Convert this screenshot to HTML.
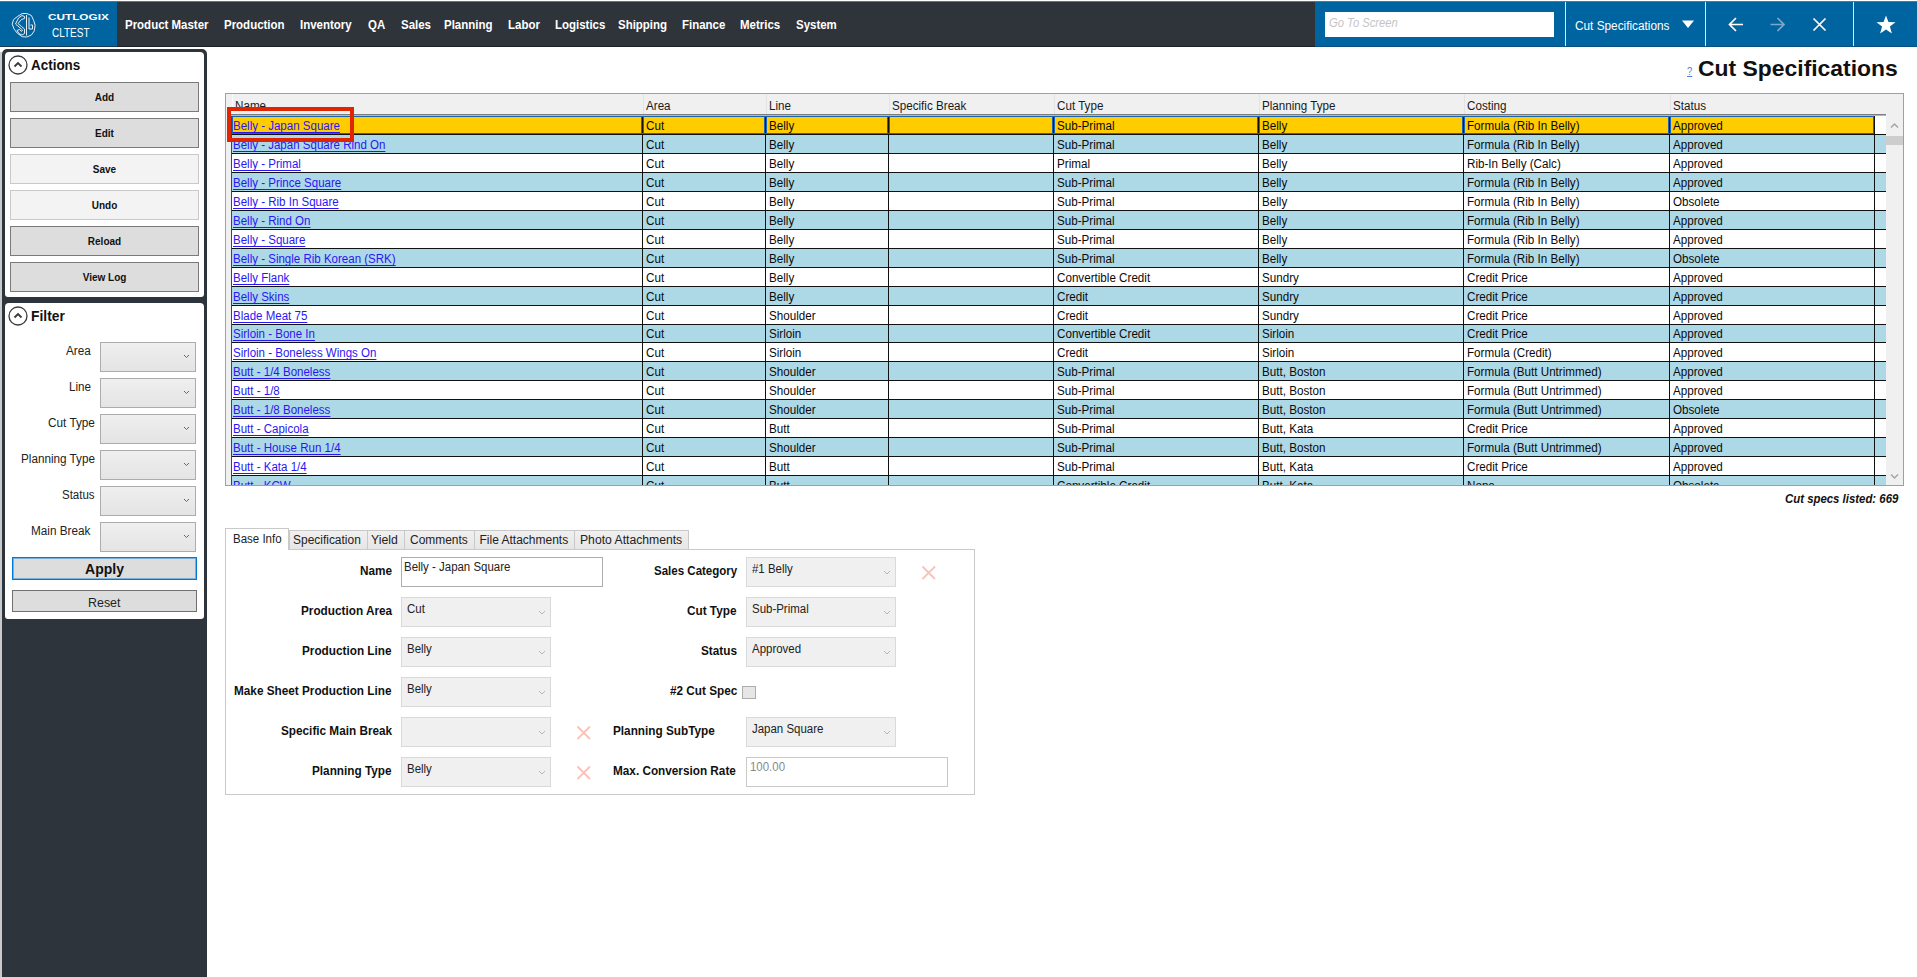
<!DOCTYPE html><html><head><meta charset="utf-8"><style>
*{box-sizing:border-box;margin:0;padding:0}
html,body{width:1917px;height:977px;overflow:hidden;background:#fff;font-family:"Liberation Sans",sans-serif;color:#000}
.a{position:absolute}
.t{position:absolute;white-space:nowrap;line-height:1}
.u{text-decoration:underline;text-decoration-skip-ink:none;text-underline-offset:2px}
</style></head><body>
<div class="a" style="left:0px;top:1px;width:1917px;height:1px;background:#6d7074"></div>
<div class="a" style="left:0px;top:2px;width:1917px;height:44px;background:#2f343b"></div>
<div class="a" style="left:0px;top:46px;width:1917px;height:1px;background:#1d2228"></div>
<div class="a" style="left:0px;top:2px;width:117px;height:44px;background:#0064a0"></div>
<div class="a" style="left:1315px;top:2px;width:602px;height:44px;background:#0064a0"></div>
<div class="a" style="left:0px;top:46px;width:117px;height:1px;background:#173c5a"></div>
<div class="a" style="left:1315px;top:46px;width:602px;height:1px;background:#0c4f82"></div>
<svg class="a" style="left:11px;top:12px" width="26" height="27" viewBox="0 0 26 27" fill="none" stroke="#e6eef7" stroke-width="1" stroke-linejoin="round">
<path d="M6.3 4.6 L11.2 1.5 L15.8 1.5 L20.4 3.5 L22.7 8.6 L24.1 13.2 L23.3 18.9 L20.4 23 L15.8 25 L11.2 24.7 L6.3 21.2 L3.2 17.2 L1.2 12.1 L2.6 7.5 Z"/>
<path d="M7.5 6 L11 3.5 L13.5 4.5 L13.5 6.5 L10.5 7.5 L7 11.5 L10.5 14.5 L13.5 17 L13.5 21.5 L11 23 L8 21.5 L6 18.5 L8.5 17.5 L10.5 19.5 L11.5 18 L4.5 12 Z"/>
<path d="M15.5 3 L15.5 23.5 M18 5.5 L18 17 L21.5 17 L21.5 13 L19.5 13"/>
</svg>
<div class="t" style="left:48.42px;top:13px;font-size:9px;font-weight:bold;font-style:normal;color:#fff;transform:scaleX(1.3076);transform-origin:0 0;">CUTLOGIX</div>
<div class="t" style="left:52.14px;top:26px;font-size:13px;font-weight:normal;font-style:normal;color:#fff;transform:scaleX(0.7672);transform-origin:0 0;">CLTEST</div>
<div class="t" style="left:124.53px;top:19px;font-size:12px;font-weight:bold;font-style:normal;color:#fff;transform:scaleX(0.9560);transform-origin:0 0;">Product Master</div>
<div class="t" style="left:224.23px;top:19px;font-size:12px;font-weight:bold;font-style:normal;color:#fff;transform:scaleX(0.9560);transform-origin:0 0;">Production</div>
<div class="t" style="left:300.43px;top:19px;font-size:12px;font-weight:bold;font-style:normal;color:#fff;transform:scaleX(0.9560);transform-origin:0 0;">Inventory</div>
<div class="t" style="left:368.43px;top:19px;font-size:12px;font-weight:bold;font-style:normal;color:#fff;transform:scaleX(0.9560);transform-origin:0 0;">QA</div>
<div class="t" style="left:401.43px;top:19px;font-size:12px;font-weight:bold;font-style:normal;color:#fff;transform:scaleX(0.9560);transform-origin:0 0;">Sales</div>
<div class="t" style="left:444.43px;top:19px;font-size:12px;font-weight:bold;font-style:normal;color:#fff;transform:scaleX(0.9560);transform-origin:0 0;">Planning</div>
<div class="t" style="left:508.43px;top:19px;font-size:12px;font-weight:bold;font-style:normal;color:#fff;transform:scaleX(0.9560);transform-origin:0 0;">Labor</div>
<div class="t" style="left:555.43px;top:19px;font-size:12px;font-weight:bold;font-style:normal;color:#fff;transform:scaleX(0.9560);transform-origin:0 0;">Logistics</div>
<div class="t" style="left:618.43px;top:19px;font-size:12px;font-weight:bold;font-style:normal;color:#fff;transform:scaleX(0.9560);transform-origin:0 0;">Shipping</div>
<div class="t" style="left:682.43px;top:19px;font-size:12px;font-weight:bold;font-style:normal;color:#fff;transform:scaleX(0.9560);transform-origin:0 0;">Finance</div>
<div class="t" style="left:740.43px;top:19px;font-size:12px;font-weight:bold;font-style:normal;color:#fff;transform:scaleX(0.9560);transform-origin:0 0;">Metrics</div>
<div class="t" style="left:796.43px;top:19px;font-size:12px;font-weight:bold;font-style:normal;color:#fff;transform:scaleX(0.9560);transform-origin:0 0;">System</div>
<div class="a" style="left:1325px;top:12px;width:229px;height:25px;background:#fff"></div>
<div class="t" style="left:1329.44px;top:17px;font-size:12px;font-weight:normal;font-style:italic;color:#c4c4c4;transform:scaleX(0.9348);transform-origin:0 0;">Go To Screen</div>
<div class="a" style="left:1565px;top:2px;width:1px;height:44px;background:#dfe9f2"></div>
<div class="a" style="left:1705px;top:2px;width:1px;height:44px;background:#dfe9f2"></div>
<div class="a" style="left:1853px;top:2px;width:1px;height:44px;background:#dfe9f2"></div>
<div class="t" style="left:1574.73px;top:20px;font-size:12.5px;font-weight:normal;font-style:normal;color:#fff;transform:scaleX(0.9446);transform-origin:0 0;">Cut Specifications</div>
<svg class="a" style="left:1682px;top:20px" width="12" height="9"><path d="M0 0.5 L12 0.5 L6 8 Z" fill="#fff"/></svg>
<svg class="a" style="left:1727px;top:16px" width="18" height="17" fill="none" stroke="#fff" stroke-width="1.7"><path d="M2.5 8.5 L16 8.5 M9 2 L2.5 8.5 L9 15"/></svg>
<svg class="a" style="left:1769px;top:16px" width="18" height="17" fill="none" stroke="#7ea7c8" stroke-width="1.7"><path d="M1.5 8.5 L15 8.5 M8.5 2 L15 8.5 L8.5 15"/></svg>
<svg class="a" style="left:1812px;top:17px" width="15" height="15" fill="none" stroke="#fff" stroke-width="1.7"><path d="M1.5 1.5 L13.5 13.5 M13.5 1.5 L1.5 13.5"/></svg>
<svg class="a" style="left:1876px;top:15px" width="20" height="19"><path d="M10 0.5 L12.4 7 L19.5 7.2 L13.9 11.5 L15.9 18.5 L10 14.4 L4.1 18.5 L6.1 11.5 L0.5 7.2 L7.6 7 Z" fill="#fff"/></svg>
<div class="a" style="left:0px;top:47px;width:207px;height:2px;background:#fff"></div>
<div class="a" style="left:2px;top:49px;width:205px;height:928px;background:#2e343c;border-radius:5px 5px 0 0"></div>
<div class="a" style="left:0px;top:52px;width:2px;height:925px;background:#c9cacc"></div>
<div class="a" style="left:5px;top:52px;width:199px;height:245px;background:#fff;border-radius:4px 4px 3px 3px"></div>
<svg class="a" style="left:8px;top:54.5px" width="20" height="20" fill="none" stroke="#3a3a3a" stroke-width="1.3"><circle cx="10" cy="10" r="9"/><path d="M6.5 11.5 L10 8 L13.5 11.5" stroke-width="1.8"/></svg>
<div class="t" style="left:30.92px;top:58px;font-size:14px;font-weight:bold;font-style:normal;color:#111;transform:scaleX(0.9604);transform-origin:0 0;">Actions</div>
<div class="a" style="left:10px;top:82px;width:189px;height:30px;background:#dddddd;border:1px solid #7a7a7a"></div>
<div class="t" style="left:94.78px;top:93px;font-size:10px;font-weight:bold;font-style:normal;color:#111;">Add</div>
<div class="a" style="left:10px;top:118px;width:189px;height:30px;background:#dddddd;border:1px solid #7a7a7a"></div>
<div class="t" style="left:95.06px;top:129px;font-size:10px;font-weight:bold;font-style:normal;color:#111;">Edit</div>
<div class="a" style="left:10px;top:154px;width:189px;height:30px;background:#f3f3f3;border:1px solid #c9c9c9"></div>
<div class="t" style="left:92.82px;top:165px;font-size:10px;font-weight:bold;font-style:normal;color:#111;">Save</div>
<div class="a" style="left:10px;top:190px;width:189px;height:30px;background:#f3f3f3;border:1px solid #c9c9c9"></div>
<div class="t" style="left:91.73px;top:201px;font-size:10px;font-weight:bold;font-style:normal;color:#111;">Undo</div>
<div class="a" style="left:10px;top:226px;width:189px;height:30px;background:#dddddd;border:1px solid #7a7a7a"></div>
<div class="t" style="left:87.83px;top:237px;font-size:10px;font-weight:bold;font-style:normal;color:#111;">Reload</div>
<div class="a" style="left:10px;top:262px;width:189px;height:30px;background:#dddddd;border:1px solid #7a7a7a"></div>
<div class="t" style="left:82.65px;top:273px;font-size:10px;font-weight:bold;font-style:normal;color:#111;">View Log</div>
<div class="a" style="left:5px;top:303px;width:199px;height:316px;background:#fff;border-radius:4px 4px 3px 3px"></div>
<svg class="a" style="left:8px;top:305.5px" width="20" height="20" fill="none" stroke="#3a3a3a" stroke-width="1.3"><circle cx="10" cy="10" r="9"/><path d="M6.5 11.5 L10 8 L13.5 11.5" stroke-width="1.8"/></svg>
<div class="t" style="left:31.11px;top:309px;font-size:14px;font-weight:bold;font-style:normal;color:#111;transform:scaleX(0.9876);transform-origin:0 0;">Filter</div>
<div class="t" style="left:65.79px;top:345px;font-size:12px;font-weight:normal;font-style:normal;color:#222;transform:scaleX(0.9784);transform-origin:0 0;">Area</div>
<div class="a" style="left:100px;top:342px;width:96px;height:30px;background:linear-gradient(#efefef,#e4e4e4);border:1px solid #acacac"></div>
<svg class="a" style="left:183px;top:354px" width="7" height="5" fill="none" stroke="#666" stroke-width="1"><path d="M1 1 L3.5 3.5 L6 1"/></svg>
<div class="t" style="left:68.58px;top:381px;font-size:12px;font-weight:normal;font-style:normal;color:#222;transform:scaleX(0.9698);transform-origin:0 0;">Line</div>
<div class="a" style="left:100px;top:378px;width:96px;height:30px;background:linear-gradient(#efefef,#e4e4e4);border:1px solid #acacac"></div>
<svg class="a" style="left:183px;top:390px" width="7" height="5" fill="none" stroke="#666" stroke-width="1"><path d="M1 1 L3.5 3.5 L6 1"/></svg>
<div class="t" style="left:47.69px;top:417px;font-size:12px;font-weight:normal;font-style:normal;color:#222;transform:scaleX(0.9811);transform-origin:0 0;">Cut Type</div>
<div class="a" style="left:100px;top:414px;width:96px;height:30px;background:linear-gradient(#efefef,#e4e4e4);border:1px solid #acacac"></div>
<svg class="a" style="left:183px;top:426px" width="7" height="5" fill="none" stroke="#666" stroke-width="1"><path d="M1 1 L3.5 3.5 L6 1"/></svg>
<div class="t" style="left:20.59px;top:453px;font-size:12px;font-weight:normal;font-style:normal;color:#222;transform:scaleX(0.9758);transform-origin:0 0;">Planning Type</div>
<div class="a" style="left:100px;top:450px;width:96px;height:30px;background:linear-gradient(#efefef,#e4e4e4);border:1px solid #acacac"></div>
<svg class="a" style="left:183px;top:462px" width="7" height="5" fill="none" stroke="#666" stroke-width="1"><path d="M1 1 L3.5 3.5 L6 1"/></svg>
<div class="t" style="left:61.97px;top:489px;font-size:12px;font-weight:normal;font-style:normal;color:#222;transform:scaleX(0.9583);transform-origin:0 0;">Status</div>
<div class="a" style="left:100px;top:486px;width:96px;height:30px;background:linear-gradient(#efefef,#e4e4e4);border:1px solid #acacac"></div>
<svg class="a" style="left:183px;top:498px" width="7" height="5" fill="none" stroke="#666" stroke-width="1"><path d="M1 1 L3.5 3.5 L6 1"/></svg>
<div class="t" style="left:31.29px;top:525px;font-size:12px;font-weight:normal;font-style:normal;color:#222;transform:scaleX(0.9788);transform-origin:0 0;">Main Break</div>
<div class="a" style="left:100px;top:522px;width:96px;height:30px;background:linear-gradient(#efefef,#e4e4e4);border:1px solid #acacac"></div>
<svg class="a" style="left:183px;top:534px" width="7" height="5" fill="none" stroke="#666" stroke-width="1"><path d="M1 1 L3.5 3.5 L6 1"/></svg>
<div class="a" style="left:12px;top:557px;width:185px;height:23px;background:#dddddd;border:1px solid #0078d7;box-shadow:inset 0 0 0 1px rgba(0,120,215,0.45)"></div>
<div class="t" style="left:85.06px;top:562px;font-size:14px;font-weight:bold;font-style:normal;color:#111;">Apply</div>
<div class="a" style="left:12px;top:590px;width:185px;height:22px;background:#dddddd;border:1px solid #707070"></div>
<div class="t" style="left:88.28px;top:596px;font-size:13.5px;font-weight:normal;font-style:normal;color:#222;transform:scaleX(0.9200);transform-origin:0 0;">Reset</div>
<div class="t" style="left:1686.99px;top:66px;font-size:11px;font-weight:normal;font-style:normal;color:#4a80d6;transform:scaleX(0.8500);transform-origin:0 0;text-decoration:underline;">?</div>
<div class="t" style="left:1698.38px;top:58px;font-size:22px;font-weight:bold;font-style:normal;color:#111;transform:scaleX(1.0411);transform-origin:0 0;">Cut Specifications</div>
<div class="a" style="left:225px;top:93px;width:1679px;height:393px;border:1px solid #89a5c4;background:#f0f0f0"></div>
<div class="a" style="left:226px;top:94px;width:1677px;height:391px;overflow:hidden">
<div class="t" style="left:9.02px;top:6px;font-size:12px;font-weight:normal;font-style:normal;color:#1a1a1a;transform:scaleX(0.9700);transform-origin:0 0;">Name</div>
<div class="t" style="left:420.02px;top:6px;font-size:12px;font-weight:normal;font-style:normal;color:#1a1a1a;transform:scaleX(0.9700);transform-origin:0 0;">Area</div>
<div class="t" style="left:543.02px;top:6px;font-size:12px;font-weight:normal;font-style:normal;color:#1a1a1a;transform:scaleX(0.9700);transform-origin:0 0;">Line</div>
<div class="t" style="left:666.02px;top:6px;font-size:12px;font-weight:normal;font-style:normal;color:#1a1a1a;transform:scaleX(0.9700);transform-origin:0 0;">Specific Break</div>
<div class="t" style="left:831.02px;top:6px;font-size:12px;font-weight:normal;font-style:normal;color:#1a1a1a;transform:scaleX(0.9700);transform-origin:0 0;">Cut Type</div>
<div class="t" style="left:1036.02px;top:6px;font-size:12px;font-weight:normal;font-style:normal;color:#1a1a1a;transform:scaleX(0.9700);transform-origin:0 0;">Planning Type</div>
<div class="t" style="left:1241.02px;top:6px;font-size:12px;font-weight:normal;font-style:normal;color:#1a1a1a;transform:scaleX(0.9700);transform-origin:0 0;">Costing</div>
<div class="t" style="left:1447.02px;top:6px;font-size:12px;font-weight:normal;font-style:normal;color:#1a1a1a;transform:scaleX(0.9700);transform-origin:0 0;">Status</div>
<div class="a" style="left:6px;top:0px;width:1px;height:20px;background:#fbfbfb"></div>
<div class="a" style="left:417px;top:0px;width:1px;height:20px;background:#e3e3e3"></div>
<div class="a" style="left:540px;top:0px;width:1px;height:20px;background:#e3e3e3"></div>
<div class="a" style="left:663px;top:0px;width:1px;height:20px;background:#e3e3e3"></div>
<div class="a" style="left:828px;top:0px;width:1px;height:20px;background:#e3e3e3"></div>
<div class="a" style="left:1033px;top:0px;width:1px;height:20px;background:#e3e3e3"></div>
<div class="a" style="left:1238px;top:0px;width:1px;height:20px;background:#e3e3e3"></div>
<div class="a" style="left:1444px;top:0px;width:1px;height:20px;background:#e3e3e3"></div>
<div class="a" style="left:5px;top:20px;width:1655px;height:1px;background:#7d7d7d"></div>
<div class="a" style="left:5px;top:21px;width:1655px;height:1px;background:#b8b8b8"></div>
<div class="a" style="left:6px;top:22px;width:1642px;height:18px;background:#ffcc00"></div>
<div class="a" style="left:1649px;top:22px;width:11px;height:18px;background:#fff"></div>
<div class="a" style="left:5px;top:40px;width:1655px;height:1px;background:#111"></div>
<div class="t" style="left:7.22px;top:26px;font-size:12px;font-weight:normal;font-style:normal;color:#2a16f5;transform:scaleX(0.9600);transform-origin:0 0;text-decoration:underline;text-decoration-skip-ink:none;text-underline-offset:1.5px;">Belly - Japan Square</div>
<div class="t" style="left:419.72px;top:26px;font-size:12px;font-weight:normal;font-style:normal;color:#0a0a0a;transform:scaleX(0.9700);transform-origin:0 0;">Cut</div>
<div class="t" style="left:542.72px;top:26px;font-size:12px;font-weight:normal;font-style:normal;color:#0a0a0a;transform:scaleX(0.9700);transform-origin:0 0;">Belly</div>
<div class="t" style="left:830.72px;top:26px;font-size:12px;font-weight:normal;font-style:normal;color:#0a0a0a;transform:scaleX(0.9700);transform-origin:0 0;">Sub-Primal</div>
<div class="t" style="left:1035.72px;top:26px;font-size:12px;font-weight:normal;font-style:normal;color:#0a0a0a;transform:scaleX(0.9700);transform-origin:0 0;">Belly</div>
<div class="t" style="left:1240.72px;top:26px;font-size:12px;font-weight:normal;font-style:normal;color:#0a0a0a;transform:scaleX(0.9700);transform-origin:0 0;">Formula (Rib In Belly)</div>
<div class="t" style="left:1446.72px;top:26px;font-size:12px;font-weight:normal;font-style:normal;color:#0a0a0a;transform:scaleX(0.9700);transform-origin:0 0;">Approved</div>
<div class="a" style="left:6px;top:41px;width:1654px;height:18px;background:#add8e6"></div>
<div class="a" style="left:5px;top:59px;width:1655px;height:1px;background:#111"></div>
<div class="t" style="left:7.22px;top:45px;font-size:12px;font-weight:normal;font-style:normal;color:#2a16f5;transform:scaleX(0.9600);transform-origin:0 0;text-decoration:underline;text-decoration-skip-ink:none;text-underline-offset:1.5px;">Belly - Japan Square Rind On</div>
<div class="t" style="left:419.72px;top:45px;font-size:12px;font-weight:normal;font-style:normal;color:#0a0a0a;transform:scaleX(0.9700);transform-origin:0 0;">Cut</div>
<div class="t" style="left:542.72px;top:45px;font-size:12px;font-weight:normal;font-style:normal;color:#0a0a0a;transform:scaleX(0.9700);transform-origin:0 0;">Belly</div>
<div class="t" style="left:830.72px;top:45px;font-size:12px;font-weight:normal;font-style:normal;color:#0a0a0a;transform:scaleX(0.9700);transform-origin:0 0;">Sub-Primal</div>
<div class="t" style="left:1035.72px;top:45px;font-size:12px;font-weight:normal;font-style:normal;color:#0a0a0a;transform:scaleX(0.9700);transform-origin:0 0;">Belly</div>
<div class="t" style="left:1240.72px;top:45px;font-size:12px;font-weight:normal;font-style:normal;color:#0a0a0a;transform:scaleX(0.9700);transform-origin:0 0;">Formula (Rib In Belly)</div>
<div class="t" style="left:1446.72px;top:45px;font-size:12px;font-weight:normal;font-style:normal;color:#0a0a0a;transform:scaleX(0.9700);transform-origin:0 0;">Approved</div>
<div class="a" style="left:6px;top:60px;width:1654px;height:18px;background:#ffffff"></div>
<div class="a" style="left:5px;top:78px;width:1655px;height:1px;background:#111"></div>
<div class="t" style="left:7.22px;top:64px;font-size:12px;font-weight:normal;font-style:normal;color:#2a16f5;transform:scaleX(0.9600);transform-origin:0 0;text-decoration:underline;text-decoration-skip-ink:none;text-underline-offset:1.5px;">Belly - Primal</div>
<div class="t" style="left:419.72px;top:64px;font-size:12px;font-weight:normal;font-style:normal;color:#0a0a0a;transform:scaleX(0.9700);transform-origin:0 0;">Cut</div>
<div class="t" style="left:542.72px;top:64px;font-size:12px;font-weight:normal;font-style:normal;color:#0a0a0a;transform:scaleX(0.9700);transform-origin:0 0;">Belly</div>
<div class="t" style="left:830.72px;top:64px;font-size:12px;font-weight:normal;font-style:normal;color:#0a0a0a;transform:scaleX(0.9700);transform-origin:0 0;">Primal</div>
<div class="t" style="left:1035.72px;top:64px;font-size:12px;font-weight:normal;font-style:normal;color:#0a0a0a;transform:scaleX(0.9700);transform-origin:0 0;">Belly</div>
<div class="t" style="left:1240.72px;top:64px;font-size:12px;font-weight:normal;font-style:normal;color:#0a0a0a;transform:scaleX(0.9700);transform-origin:0 0;">Rib-In Belly (Calc)</div>
<div class="t" style="left:1446.72px;top:64px;font-size:12px;font-weight:normal;font-style:normal;color:#0a0a0a;transform:scaleX(0.9700);transform-origin:0 0;">Approved</div>
<div class="a" style="left:6px;top:79px;width:1654px;height:18px;background:#add8e6"></div>
<div class="a" style="left:5px;top:97px;width:1655px;height:1px;background:#111"></div>
<div class="t" style="left:7.22px;top:83px;font-size:12px;font-weight:normal;font-style:normal;color:#2a16f5;transform:scaleX(0.9600);transform-origin:0 0;text-decoration:underline;text-decoration-skip-ink:none;text-underline-offset:1.5px;">Belly - Prince Square</div>
<div class="t" style="left:419.72px;top:83px;font-size:12px;font-weight:normal;font-style:normal;color:#0a0a0a;transform:scaleX(0.9700);transform-origin:0 0;">Cut</div>
<div class="t" style="left:542.72px;top:83px;font-size:12px;font-weight:normal;font-style:normal;color:#0a0a0a;transform:scaleX(0.9700);transform-origin:0 0;">Belly</div>
<div class="t" style="left:830.72px;top:83px;font-size:12px;font-weight:normal;font-style:normal;color:#0a0a0a;transform:scaleX(0.9700);transform-origin:0 0;">Sub-Primal</div>
<div class="t" style="left:1035.72px;top:83px;font-size:12px;font-weight:normal;font-style:normal;color:#0a0a0a;transform:scaleX(0.9700);transform-origin:0 0;">Belly</div>
<div class="t" style="left:1240.72px;top:83px;font-size:12px;font-weight:normal;font-style:normal;color:#0a0a0a;transform:scaleX(0.9700);transform-origin:0 0;">Formula (Rib In Belly)</div>
<div class="t" style="left:1446.72px;top:83px;font-size:12px;font-weight:normal;font-style:normal;color:#0a0a0a;transform:scaleX(0.9700);transform-origin:0 0;">Approved</div>
<div class="a" style="left:6px;top:98px;width:1654px;height:18px;background:#ffffff"></div>
<div class="a" style="left:5px;top:116px;width:1655px;height:1px;background:#111"></div>
<div class="t" style="left:7.22px;top:102px;font-size:12px;font-weight:normal;font-style:normal;color:#2a16f5;transform:scaleX(0.9600);transform-origin:0 0;text-decoration:underline;text-decoration-skip-ink:none;text-underline-offset:1.5px;">Belly - Rib In Square</div>
<div class="t" style="left:419.72px;top:102px;font-size:12px;font-weight:normal;font-style:normal;color:#0a0a0a;transform:scaleX(0.9700);transform-origin:0 0;">Cut</div>
<div class="t" style="left:542.72px;top:102px;font-size:12px;font-weight:normal;font-style:normal;color:#0a0a0a;transform:scaleX(0.9700);transform-origin:0 0;">Belly</div>
<div class="t" style="left:830.72px;top:102px;font-size:12px;font-weight:normal;font-style:normal;color:#0a0a0a;transform:scaleX(0.9700);transform-origin:0 0;">Sub-Primal</div>
<div class="t" style="left:1035.72px;top:102px;font-size:12px;font-weight:normal;font-style:normal;color:#0a0a0a;transform:scaleX(0.9700);transform-origin:0 0;">Belly</div>
<div class="t" style="left:1240.72px;top:102px;font-size:12px;font-weight:normal;font-style:normal;color:#0a0a0a;transform:scaleX(0.9700);transform-origin:0 0;">Formula (Rib In Belly)</div>
<div class="t" style="left:1446.72px;top:102px;font-size:12px;font-weight:normal;font-style:normal;color:#0a0a0a;transform:scaleX(0.9700);transform-origin:0 0;">Obsolete</div>
<div class="a" style="left:6px;top:117px;width:1654px;height:18px;background:#add8e6"></div>
<div class="a" style="left:5px;top:135px;width:1655px;height:1px;background:#111"></div>
<div class="t" style="left:7.22px;top:121px;font-size:12px;font-weight:normal;font-style:normal;color:#2a16f5;transform:scaleX(0.9600);transform-origin:0 0;text-decoration:underline;text-decoration-skip-ink:none;text-underline-offset:1.5px;">Belly - Rind On</div>
<div class="t" style="left:419.72px;top:121px;font-size:12px;font-weight:normal;font-style:normal;color:#0a0a0a;transform:scaleX(0.9700);transform-origin:0 0;">Cut</div>
<div class="t" style="left:542.72px;top:121px;font-size:12px;font-weight:normal;font-style:normal;color:#0a0a0a;transform:scaleX(0.9700);transform-origin:0 0;">Belly</div>
<div class="t" style="left:830.72px;top:121px;font-size:12px;font-weight:normal;font-style:normal;color:#0a0a0a;transform:scaleX(0.9700);transform-origin:0 0;">Sub-Primal</div>
<div class="t" style="left:1035.72px;top:121px;font-size:12px;font-weight:normal;font-style:normal;color:#0a0a0a;transform:scaleX(0.9700);transform-origin:0 0;">Belly</div>
<div class="t" style="left:1240.72px;top:121px;font-size:12px;font-weight:normal;font-style:normal;color:#0a0a0a;transform:scaleX(0.9700);transform-origin:0 0;">Formula (Rib In Belly)</div>
<div class="t" style="left:1446.72px;top:121px;font-size:12px;font-weight:normal;font-style:normal;color:#0a0a0a;transform:scaleX(0.9700);transform-origin:0 0;">Approved</div>
<div class="a" style="left:6px;top:136px;width:1654px;height:18px;background:#ffffff"></div>
<div class="a" style="left:5px;top:154px;width:1655px;height:1px;background:#111"></div>
<div class="t" style="left:7.22px;top:140px;font-size:12px;font-weight:normal;font-style:normal;color:#2a16f5;transform:scaleX(0.9600);transform-origin:0 0;text-decoration:underline;text-decoration-skip-ink:none;text-underline-offset:1.5px;">Belly - Square</div>
<div class="t" style="left:419.72px;top:140px;font-size:12px;font-weight:normal;font-style:normal;color:#0a0a0a;transform:scaleX(0.9700);transform-origin:0 0;">Cut</div>
<div class="t" style="left:542.72px;top:140px;font-size:12px;font-weight:normal;font-style:normal;color:#0a0a0a;transform:scaleX(0.9700);transform-origin:0 0;">Belly</div>
<div class="t" style="left:830.72px;top:140px;font-size:12px;font-weight:normal;font-style:normal;color:#0a0a0a;transform:scaleX(0.9700);transform-origin:0 0;">Sub-Primal</div>
<div class="t" style="left:1035.72px;top:140px;font-size:12px;font-weight:normal;font-style:normal;color:#0a0a0a;transform:scaleX(0.9700);transform-origin:0 0;">Belly</div>
<div class="t" style="left:1240.72px;top:140px;font-size:12px;font-weight:normal;font-style:normal;color:#0a0a0a;transform:scaleX(0.9700);transform-origin:0 0;">Formula (Rib In Belly)</div>
<div class="t" style="left:1446.72px;top:140px;font-size:12px;font-weight:normal;font-style:normal;color:#0a0a0a;transform:scaleX(0.9700);transform-origin:0 0;">Approved</div>
<div class="a" style="left:6px;top:155px;width:1654px;height:18px;background:#add8e6"></div>
<div class="a" style="left:5px;top:173px;width:1655px;height:1px;background:#111"></div>
<div class="t" style="left:7.22px;top:159px;font-size:12px;font-weight:normal;font-style:normal;color:#2a16f5;transform:scaleX(0.9600);transform-origin:0 0;text-decoration:underline;text-decoration-skip-ink:none;text-underline-offset:1.5px;">Belly - Single Rib Korean (SRK)</div>
<div class="t" style="left:419.72px;top:159px;font-size:12px;font-weight:normal;font-style:normal;color:#0a0a0a;transform:scaleX(0.9700);transform-origin:0 0;">Cut</div>
<div class="t" style="left:542.72px;top:159px;font-size:12px;font-weight:normal;font-style:normal;color:#0a0a0a;transform:scaleX(0.9700);transform-origin:0 0;">Belly</div>
<div class="t" style="left:830.72px;top:159px;font-size:12px;font-weight:normal;font-style:normal;color:#0a0a0a;transform:scaleX(0.9700);transform-origin:0 0;">Sub-Primal</div>
<div class="t" style="left:1035.72px;top:159px;font-size:12px;font-weight:normal;font-style:normal;color:#0a0a0a;transform:scaleX(0.9700);transform-origin:0 0;">Belly</div>
<div class="t" style="left:1240.72px;top:159px;font-size:12px;font-weight:normal;font-style:normal;color:#0a0a0a;transform:scaleX(0.9700);transform-origin:0 0;">Formula (Rib In Belly)</div>
<div class="t" style="left:1446.72px;top:159px;font-size:12px;font-weight:normal;font-style:normal;color:#0a0a0a;transform:scaleX(0.9700);transform-origin:0 0;">Obsolete</div>
<div class="a" style="left:6px;top:174px;width:1654px;height:18px;background:#ffffff"></div>
<div class="a" style="left:5px;top:192px;width:1655px;height:1px;background:#111"></div>
<div class="t" style="left:7.22px;top:178px;font-size:12px;font-weight:normal;font-style:normal;color:#2a16f5;transform:scaleX(0.9600);transform-origin:0 0;text-decoration:underline;text-decoration-skip-ink:none;text-underline-offset:1.5px;">Belly Flank</div>
<div class="t" style="left:419.72px;top:178px;font-size:12px;font-weight:normal;font-style:normal;color:#0a0a0a;transform:scaleX(0.9700);transform-origin:0 0;">Cut</div>
<div class="t" style="left:542.72px;top:178px;font-size:12px;font-weight:normal;font-style:normal;color:#0a0a0a;transform:scaleX(0.9700);transform-origin:0 0;">Belly</div>
<div class="t" style="left:830.72px;top:178px;font-size:12px;font-weight:normal;font-style:normal;color:#0a0a0a;transform:scaleX(0.9700);transform-origin:0 0;">Convertible Credit</div>
<div class="t" style="left:1035.72px;top:178px;font-size:12px;font-weight:normal;font-style:normal;color:#0a0a0a;transform:scaleX(0.9700);transform-origin:0 0;">Sundry</div>
<div class="t" style="left:1240.72px;top:178px;font-size:12px;font-weight:normal;font-style:normal;color:#0a0a0a;transform:scaleX(0.9700);transform-origin:0 0;">Credit Price</div>
<div class="t" style="left:1446.72px;top:178px;font-size:12px;font-weight:normal;font-style:normal;color:#0a0a0a;transform:scaleX(0.9700);transform-origin:0 0;">Approved</div>
<div class="a" style="left:6px;top:193px;width:1654px;height:18px;background:#add8e6"></div>
<div class="a" style="left:5px;top:211px;width:1655px;height:1px;background:#111"></div>
<div class="t" style="left:7.22px;top:197px;font-size:12px;font-weight:normal;font-style:normal;color:#2a16f5;transform:scaleX(0.9600);transform-origin:0 0;text-decoration:underline;text-decoration-skip-ink:none;text-underline-offset:1.5px;">Belly Skins</div>
<div class="t" style="left:419.72px;top:197px;font-size:12px;font-weight:normal;font-style:normal;color:#0a0a0a;transform:scaleX(0.9700);transform-origin:0 0;">Cut</div>
<div class="t" style="left:542.72px;top:197px;font-size:12px;font-weight:normal;font-style:normal;color:#0a0a0a;transform:scaleX(0.9700);transform-origin:0 0;">Belly</div>
<div class="t" style="left:830.72px;top:197px;font-size:12px;font-weight:normal;font-style:normal;color:#0a0a0a;transform:scaleX(0.9700);transform-origin:0 0;">Credit</div>
<div class="t" style="left:1035.72px;top:197px;font-size:12px;font-weight:normal;font-style:normal;color:#0a0a0a;transform:scaleX(0.9700);transform-origin:0 0;">Sundry</div>
<div class="t" style="left:1240.72px;top:197px;font-size:12px;font-weight:normal;font-style:normal;color:#0a0a0a;transform:scaleX(0.9700);transform-origin:0 0;">Credit Price</div>
<div class="t" style="left:1446.72px;top:197px;font-size:12px;font-weight:normal;font-style:normal;color:#0a0a0a;transform:scaleX(0.9700);transform-origin:0 0;">Approved</div>
<div class="a" style="left:6px;top:212px;width:1654px;height:18px;background:#ffffff"></div>
<div class="a" style="left:5px;top:230px;width:1655px;height:1px;background:#111"></div>
<div class="t" style="left:7.22px;top:216px;font-size:12px;font-weight:normal;font-style:normal;color:#2a16f5;transform:scaleX(0.9600);transform-origin:0 0;text-decoration:underline;text-decoration-skip-ink:none;text-underline-offset:1.5px;">Blade Meat 75</div>
<div class="t" style="left:419.72px;top:216px;font-size:12px;font-weight:normal;font-style:normal;color:#0a0a0a;transform:scaleX(0.9700);transform-origin:0 0;">Cut</div>
<div class="t" style="left:542.72px;top:216px;font-size:12px;font-weight:normal;font-style:normal;color:#0a0a0a;transform:scaleX(0.9700);transform-origin:0 0;">Shoulder</div>
<div class="t" style="left:830.72px;top:216px;font-size:12px;font-weight:normal;font-style:normal;color:#0a0a0a;transform:scaleX(0.9700);transform-origin:0 0;">Credit</div>
<div class="t" style="left:1035.72px;top:216px;font-size:12px;font-weight:normal;font-style:normal;color:#0a0a0a;transform:scaleX(0.9700);transform-origin:0 0;">Sundry</div>
<div class="t" style="left:1240.72px;top:216px;font-size:12px;font-weight:normal;font-style:normal;color:#0a0a0a;transform:scaleX(0.9700);transform-origin:0 0;">Credit Price</div>
<div class="t" style="left:1446.72px;top:216px;font-size:12px;font-weight:normal;font-style:normal;color:#0a0a0a;transform:scaleX(0.9700);transform-origin:0 0;">Approved</div>
<div class="a" style="left:6px;top:231px;width:1654px;height:17px;background:#add8e6"></div>
<div class="a" style="left:5px;top:248px;width:1655px;height:1px;background:#111"></div>
<div class="t" style="left:7.22px;top:234px;font-size:12px;font-weight:normal;font-style:normal;color:#2a16f5;transform:scaleX(0.9600);transform-origin:0 0;text-decoration:underline;text-decoration-skip-ink:none;text-underline-offset:1.5px;">Sirloin - Bone In</div>
<div class="t" style="left:419.72px;top:234px;font-size:12px;font-weight:normal;font-style:normal;color:#0a0a0a;transform:scaleX(0.9700);transform-origin:0 0;">Cut</div>
<div class="t" style="left:542.72px;top:234px;font-size:12px;font-weight:normal;font-style:normal;color:#0a0a0a;transform:scaleX(0.9700);transform-origin:0 0;">Sirloin</div>
<div class="t" style="left:830.72px;top:234px;font-size:12px;font-weight:normal;font-style:normal;color:#0a0a0a;transform:scaleX(0.9700);transform-origin:0 0;">Convertible Credit</div>
<div class="t" style="left:1035.72px;top:234px;font-size:12px;font-weight:normal;font-style:normal;color:#0a0a0a;transform:scaleX(0.9700);transform-origin:0 0;">Sirloin</div>
<div class="t" style="left:1240.72px;top:234px;font-size:12px;font-weight:normal;font-style:normal;color:#0a0a0a;transform:scaleX(0.9700);transform-origin:0 0;">Credit Price</div>
<div class="t" style="left:1446.72px;top:234px;font-size:12px;font-weight:normal;font-style:normal;color:#0a0a0a;transform:scaleX(0.9700);transform-origin:0 0;">Approved</div>
<div class="a" style="left:6px;top:249px;width:1654px;height:18px;background:#ffffff"></div>
<div class="a" style="left:5px;top:267px;width:1655px;height:1px;background:#111"></div>
<div class="t" style="left:7.22px;top:253px;font-size:12px;font-weight:normal;font-style:normal;color:#2a16f5;transform:scaleX(0.9600);transform-origin:0 0;text-decoration:underline;text-decoration-skip-ink:none;text-underline-offset:1.5px;">Sirloin - Boneless Wings On</div>
<div class="t" style="left:419.72px;top:253px;font-size:12px;font-weight:normal;font-style:normal;color:#0a0a0a;transform:scaleX(0.9700);transform-origin:0 0;">Cut</div>
<div class="t" style="left:542.72px;top:253px;font-size:12px;font-weight:normal;font-style:normal;color:#0a0a0a;transform:scaleX(0.9700);transform-origin:0 0;">Sirloin</div>
<div class="t" style="left:830.72px;top:253px;font-size:12px;font-weight:normal;font-style:normal;color:#0a0a0a;transform:scaleX(0.9700);transform-origin:0 0;">Credit</div>
<div class="t" style="left:1035.72px;top:253px;font-size:12px;font-weight:normal;font-style:normal;color:#0a0a0a;transform:scaleX(0.9700);transform-origin:0 0;">Sirloin</div>
<div class="t" style="left:1240.72px;top:253px;font-size:12px;font-weight:normal;font-style:normal;color:#0a0a0a;transform:scaleX(0.9700);transform-origin:0 0;">Formula (Credit)</div>
<div class="t" style="left:1446.72px;top:253px;font-size:12px;font-weight:normal;font-style:normal;color:#0a0a0a;transform:scaleX(0.9700);transform-origin:0 0;">Approved</div>
<div class="a" style="left:6px;top:268px;width:1654px;height:18px;background:#add8e6"></div>
<div class="a" style="left:5px;top:286px;width:1655px;height:1px;background:#111"></div>
<div class="t" style="left:7.22px;top:272px;font-size:12px;font-weight:normal;font-style:normal;color:#2a16f5;transform:scaleX(0.9600);transform-origin:0 0;text-decoration:underline;text-decoration-skip-ink:none;text-underline-offset:1.5px;">Butt - 1/4 Boneless</div>
<div class="t" style="left:419.72px;top:272px;font-size:12px;font-weight:normal;font-style:normal;color:#0a0a0a;transform:scaleX(0.9700);transform-origin:0 0;">Cut</div>
<div class="t" style="left:542.72px;top:272px;font-size:12px;font-weight:normal;font-style:normal;color:#0a0a0a;transform:scaleX(0.9700);transform-origin:0 0;">Shoulder</div>
<div class="t" style="left:830.72px;top:272px;font-size:12px;font-weight:normal;font-style:normal;color:#0a0a0a;transform:scaleX(0.9700);transform-origin:0 0;">Sub-Primal</div>
<div class="t" style="left:1035.72px;top:272px;font-size:12px;font-weight:normal;font-style:normal;color:#0a0a0a;transform:scaleX(0.9700);transform-origin:0 0;">Butt, Boston</div>
<div class="t" style="left:1240.72px;top:272px;font-size:12px;font-weight:normal;font-style:normal;color:#0a0a0a;transform:scaleX(0.9700);transform-origin:0 0;">Formula (Butt Untrimmed)</div>
<div class="t" style="left:1446.72px;top:272px;font-size:12px;font-weight:normal;font-style:normal;color:#0a0a0a;transform:scaleX(0.9700);transform-origin:0 0;">Approved</div>
<div class="a" style="left:6px;top:287px;width:1654px;height:18px;background:#ffffff"></div>
<div class="a" style="left:5px;top:305px;width:1655px;height:1px;background:#111"></div>
<div class="t" style="left:7.22px;top:291px;font-size:12px;font-weight:normal;font-style:normal;color:#2a16f5;transform:scaleX(0.9600);transform-origin:0 0;text-decoration:underline;text-decoration-skip-ink:none;text-underline-offset:1.5px;">Butt - 1/8</div>
<div class="t" style="left:419.72px;top:291px;font-size:12px;font-weight:normal;font-style:normal;color:#0a0a0a;transform:scaleX(0.9700);transform-origin:0 0;">Cut</div>
<div class="t" style="left:542.72px;top:291px;font-size:12px;font-weight:normal;font-style:normal;color:#0a0a0a;transform:scaleX(0.9700);transform-origin:0 0;">Shoulder</div>
<div class="t" style="left:830.72px;top:291px;font-size:12px;font-weight:normal;font-style:normal;color:#0a0a0a;transform:scaleX(0.9700);transform-origin:0 0;">Sub-Primal</div>
<div class="t" style="left:1035.72px;top:291px;font-size:12px;font-weight:normal;font-style:normal;color:#0a0a0a;transform:scaleX(0.9700);transform-origin:0 0;">Butt, Boston</div>
<div class="t" style="left:1240.72px;top:291px;font-size:12px;font-weight:normal;font-style:normal;color:#0a0a0a;transform:scaleX(0.9700);transform-origin:0 0;">Formula (Butt Untrimmed)</div>
<div class="t" style="left:1446.72px;top:291px;font-size:12px;font-weight:normal;font-style:normal;color:#0a0a0a;transform:scaleX(0.9700);transform-origin:0 0;">Approved</div>
<div class="a" style="left:6px;top:306px;width:1654px;height:18px;background:#add8e6"></div>
<div class="a" style="left:5px;top:324px;width:1655px;height:1px;background:#111"></div>
<div class="t" style="left:7.22px;top:310px;font-size:12px;font-weight:normal;font-style:normal;color:#2a16f5;transform:scaleX(0.9600);transform-origin:0 0;text-decoration:underline;text-decoration-skip-ink:none;text-underline-offset:1.5px;">Butt - 1/8 Boneless</div>
<div class="t" style="left:419.72px;top:310px;font-size:12px;font-weight:normal;font-style:normal;color:#0a0a0a;transform:scaleX(0.9700);transform-origin:0 0;">Cut</div>
<div class="t" style="left:542.72px;top:310px;font-size:12px;font-weight:normal;font-style:normal;color:#0a0a0a;transform:scaleX(0.9700);transform-origin:0 0;">Shoulder</div>
<div class="t" style="left:830.72px;top:310px;font-size:12px;font-weight:normal;font-style:normal;color:#0a0a0a;transform:scaleX(0.9700);transform-origin:0 0;">Sub-Primal</div>
<div class="t" style="left:1035.72px;top:310px;font-size:12px;font-weight:normal;font-style:normal;color:#0a0a0a;transform:scaleX(0.9700);transform-origin:0 0;">Butt, Boston</div>
<div class="t" style="left:1240.72px;top:310px;font-size:12px;font-weight:normal;font-style:normal;color:#0a0a0a;transform:scaleX(0.9700);transform-origin:0 0;">Formula (Butt Untrimmed)</div>
<div class="t" style="left:1446.72px;top:310px;font-size:12px;font-weight:normal;font-style:normal;color:#0a0a0a;transform:scaleX(0.9700);transform-origin:0 0;">Obsolete</div>
<div class="a" style="left:6px;top:325px;width:1654px;height:18px;background:#ffffff"></div>
<div class="a" style="left:5px;top:343px;width:1655px;height:1px;background:#111"></div>
<div class="t" style="left:7.22px;top:329px;font-size:12px;font-weight:normal;font-style:normal;color:#2a16f5;transform:scaleX(0.9600);transform-origin:0 0;text-decoration:underline;text-decoration-skip-ink:none;text-underline-offset:1.5px;">Butt - Capicola</div>
<div class="t" style="left:419.72px;top:329px;font-size:12px;font-weight:normal;font-style:normal;color:#0a0a0a;transform:scaleX(0.9700);transform-origin:0 0;">Cut</div>
<div class="t" style="left:542.72px;top:329px;font-size:12px;font-weight:normal;font-style:normal;color:#0a0a0a;transform:scaleX(0.9700);transform-origin:0 0;">Butt</div>
<div class="t" style="left:830.72px;top:329px;font-size:12px;font-weight:normal;font-style:normal;color:#0a0a0a;transform:scaleX(0.9700);transform-origin:0 0;">Sub-Primal</div>
<div class="t" style="left:1035.72px;top:329px;font-size:12px;font-weight:normal;font-style:normal;color:#0a0a0a;transform:scaleX(0.9700);transform-origin:0 0;">Butt, Kata</div>
<div class="t" style="left:1240.72px;top:329px;font-size:12px;font-weight:normal;font-style:normal;color:#0a0a0a;transform:scaleX(0.9700);transform-origin:0 0;">Credit Price</div>
<div class="t" style="left:1446.72px;top:329px;font-size:12px;font-weight:normal;font-style:normal;color:#0a0a0a;transform:scaleX(0.9700);transform-origin:0 0;">Approved</div>
<div class="a" style="left:6px;top:344px;width:1654px;height:18px;background:#add8e6"></div>
<div class="a" style="left:5px;top:362px;width:1655px;height:1px;background:#111"></div>
<div class="t" style="left:7.22px;top:348px;font-size:12px;font-weight:normal;font-style:normal;color:#2a16f5;transform:scaleX(0.9600);transform-origin:0 0;text-decoration:underline;text-decoration-skip-ink:none;text-underline-offset:1.5px;">Butt - House Run 1/4</div>
<div class="t" style="left:419.72px;top:348px;font-size:12px;font-weight:normal;font-style:normal;color:#0a0a0a;transform:scaleX(0.9700);transform-origin:0 0;">Cut</div>
<div class="t" style="left:542.72px;top:348px;font-size:12px;font-weight:normal;font-style:normal;color:#0a0a0a;transform:scaleX(0.9700);transform-origin:0 0;">Shoulder</div>
<div class="t" style="left:830.72px;top:348px;font-size:12px;font-weight:normal;font-style:normal;color:#0a0a0a;transform:scaleX(0.9700);transform-origin:0 0;">Sub-Primal</div>
<div class="t" style="left:1035.72px;top:348px;font-size:12px;font-weight:normal;font-style:normal;color:#0a0a0a;transform:scaleX(0.9700);transform-origin:0 0;">Butt, Boston</div>
<div class="t" style="left:1240.72px;top:348px;font-size:12px;font-weight:normal;font-style:normal;color:#0a0a0a;transform:scaleX(0.9700);transform-origin:0 0;">Formula (Butt Untrimmed)</div>
<div class="t" style="left:1446.72px;top:348px;font-size:12px;font-weight:normal;font-style:normal;color:#0a0a0a;transform:scaleX(0.9700);transform-origin:0 0;">Approved</div>
<div class="a" style="left:6px;top:363px;width:1654px;height:18px;background:#ffffff"></div>
<div class="a" style="left:5px;top:381px;width:1655px;height:1px;background:#111"></div>
<div class="t" style="left:7.22px;top:367px;font-size:12px;font-weight:normal;font-style:normal;color:#2a16f5;transform:scaleX(0.9600);transform-origin:0 0;text-decoration:underline;text-decoration-skip-ink:none;text-underline-offset:1.5px;">Butt - Kata 1/4</div>
<div class="t" style="left:419.72px;top:367px;font-size:12px;font-weight:normal;font-style:normal;color:#0a0a0a;transform:scaleX(0.9700);transform-origin:0 0;">Cut</div>
<div class="t" style="left:542.72px;top:367px;font-size:12px;font-weight:normal;font-style:normal;color:#0a0a0a;transform:scaleX(0.9700);transform-origin:0 0;">Butt</div>
<div class="t" style="left:830.72px;top:367px;font-size:12px;font-weight:normal;font-style:normal;color:#0a0a0a;transform:scaleX(0.9700);transform-origin:0 0;">Sub-Primal</div>
<div class="t" style="left:1035.72px;top:367px;font-size:12px;font-weight:normal;font-style:normal;color:#0a0a0a;transform:scaleX(0.9700);transform-origin:0 0;">Butt, Kata</div>
<div class="t" style="left:1240.72px;top:367px;font-size:12px;font-weight:normal;font-style:normal;color:#0a0a0a;transform:scaleX(0.9700);transform-origin:0 0;">Credit Price</div>
<div class="t" style="left:1446.72px;top:367px;font-size:12px;font-weight:normal;font-style:normal;color:#0a0a0a;transform:scaleX(0.9700);transform-origin:0 0;">Approved</div>
<div class="a" style="left:6px;top:382px;width:1654px;height:18px;background:#add8e6"></div>
<div class="a" style="left:5px;top:400px;width:1655px;height:1px;background:#111"></div>
<div class="t" style="left:7.22px;top:386px;font-size:12px;font-weight:normal;font-style:normal;color:#2a16f5;transform:scaleX(0.9600);transform-origin:0 0;text-decoration:underline;text-decoration-skip-ink:none;text-underline-offset:1.5px;">Butt - KCW</div>
<div class="t" style="left:419.72px;top:386px;font-size:12px;font-weight:normal;font-style:normal;color:#0a0a0a;transform:scaleX(0.9700);transform-origin:0 0;">Cut</div>
<div class="t" style="left:542.72px;top:386px;font-size:12px;font-weight:normal;font-style:normal;color:#0a0a0a;transform:scaleX(0.9700);transform-origin:0 0;">Butt</div>
<div class="t" style="left:830.72px;top:386px;font-size:12px;font-weight:normal;font-style:normal;color:#0a0a0a;transform:scaleX(0.9700);transform-origin:0 0;">Convertible Credit</div>
<div class="t" style="left:1035.72px;top:386px;font-size:12px;font-weight:normal;font-style:normal;color:#0a0a0a;transform:scaleX(0.9700);transform-origin:0 0;">Butt, Kata</div>
<div class="t" style="left:1240.72px;top:386px;font-size:12px;font-weight:normal;font-style:normal;color:#0a0a0a;transform:scaleX(0.9700);transform-origin:0 0;">None</div>
<div class="t" style="left:1446.72px;top:386px;font-size:12px;font-weight:normal;font-style:normal;color:#0a0a0a;transform:scaleX(0.9700);transform-origin:0 0;">Obsolete</div>
<div class="a" style="left:5px;top:22px;width:1px;height:372px;background:#444"></div>
<div class="a" style="left:416px;top:22px;width:1px;height:372px;background:#111"></div>
<div class="a" style="left:539px;top:22px;width:1px;height:372px;background:#111"></div>
<div class="a" style="left:662px;top:22px;width:1px;height:372px;background:#111"></div>
<div class="a" style="left:827px;top:22px;width:1px;height:372px;background:#111"></div>
<div class="a" style="left:1032px;top:22px;width:1px;height:372px;background:#111"></div>
<div class="a" style="left:1237px;top:22px;width:1px;height:372px;background:#111"></div>
<div class="a" style="left:1443px;top:22px;width:1px;height:372px;background:#111"></div>
<div class="a" style="left:1648px;top:22px;width:1px;height:372px;background:#111"></div>
<div class="a" style="left:6px;top:22px;width:1642px;height:1px;background:#1766b5"></div>
<div class="a" style="left:6px;top:39px;width:1642px;height:1px;background:#1766b5"></div>
<div class="a" style="left:6px;top:22px;width:1px;height:18px;background:#1766b5"></div>
<div class="a" style="left:417px;top:22px;width:1px;height:18px;background:#1766b5"></div>
<div class="a" style="left:540px;top:22px;width:1px;height:18px;background:#1766b5"></div>
<div class="a" style="left:663px;top:22px;width:1px;height:18px;background:#1766b5"></div>
<div class="a" style="left:828px;top:22px;width:1px;height:18px;background:#1766b5"></div>
<div class="a" style="left:1033px;top:22px;width:1px;height:18px;background:#1766b5"></div>
<div class="a" style="left:1238px;top:22px;width:1px;height:18px;background:#1766b5"></div>
<div class="a" style="left:1444px;top:22px;width:1px;height:18px;background:#1766b5"></div>
<div class="a" style="left:415px;top:22px;width:1px;height:18px;background:#1766b5"></div>
<div class="a" style="left:538px;top:22px;width:1px;height:18px;background:#1766b5"></div>
<div class="a" style="left:661px;top:22px;width:1px;height:18px;background:#1766b5"></div>
<div class="a" style="left:826px;top:22px;width:1px;height:18px;background:#1766b5"></div>
<div class="a" style="left:1031px;top:22px;width:1px;height:18px;background:#1766b5"></div>
<div class="a" style="left:1236px;top:22px;width:1px;height:18px;background:#1766b5"></div>
<div class="a" style="left:1442px;top:22px;width:1px;height:18px;background:#1766b5"></div>
<div class="a" style="left:1647px;top:22px;width:1px;height:18px;background:#1766b5"></div>
<div class="a" style="left:1660px;top:20px;width:17px;height:371px;background:#f0f0f0"></div>
<div class="a" style="left:1660px;top:42px;width:17px;height:9px;background:#cdcdcd"></div>
<svg class="a" style="left:1664px;top:28px" width="9" height="7" fill="none" stroke="#a4a4a4" stroke-width="1.5"><path d="M1 5.5 L4.5 2 L8 5.5"/></svg>
<svg class="a" style="left:1664px;top:379px" width="9" height="7" fill="none" stroke="#a4a4a4" stroke-width="1.5"><path d="M1 1.5 L4.5 5 L8 1.5"/></svg>
</div>
<div class="a" style="left:227px;top:107px;width:127px;height:35px;border:4px solid #e02500"></div>
<div class="t" style="left:1784.87px;top:493px;font-size:12px;font-weight:bold;font-style:italic;color:#111;transform:scaleX(0.9492);transform-origin:0 0;">Cut specs listed: 669</div>
<div class="a" style="left:225px;top:549px;width:750px;height:246px;border:1px solid #c9c9c9;background:#fff"></div>
<div class="a" style="left:225px;top:528px;width:64px;height:22px;background:#fff;border:1px solid #c9c9c9;border-bottom:none"></div>
<div class="t" style="left:232.92px;top:533px;font-size:12px;font-weight:normal;font-style:normal;color:#222;transform:scaleX(0.9586);transform-origin:0 0;">Base Info</div>
<div class="a" style="left:289px;top:530px;width:79px;height:20px;background:linear-gradient(#f0f0f0,#e6e6e6);border:1px solid #c9c9c9"></div>
<div class="t" style="left:293.00px;top:534px;font-size:12px;font-weight:normal;font-style:normal;color:#222;transform:scaleX(0.9965);transform-origin:0 0;">Specification</div>
<div class="a" style="left:367px;top:530px;width:38px;height:20px;background:linear-gradient(#f0f0f0,#e6e6e6);border:1px solid #c9c9c9"></div>
<div class="t" style="left:370.89px;top:534px;font-size:12px;font-weight:normal;font-style:normal;color:#222;transform:scaleX(1.0214);transform-origin:0 0;">Yield</div>
<div class="a" style="left:404px;top:530px;width:71px;height:20px;background:linear-gradient(#f0f0f0,#e6e6e6);border:1px solid #c9c9c9"></div>
<div class="t" style="left:410.00px;top:534px;font-size:12px;font-weight:normal;font-style:normal;color:#222;transform:scaleX(0.9964);transform-origin:0 0;">Comments</div>
<div class="a" style="left:474px;top:530px;width:101px;height:20px;background:linear-gradient(#f0f0f0,#e6e6e6);border:1px solid #c9c9c9"></div>
<div class="t" style="left:479.50px;top:534px;font-size:12px;font-weight:normal;font-style:normal;color:#222;">File Attachments</div>
<div class="a" style="left:574px;top:530px;width:115px;height:20px;background:linear-gradient(#f0f0f0,#e6e6e6);border:1px solid #c9c9c9"></div>
<div class="t" style="left:579.69px;top:534px;font-size:12px;font-weight:normal;font-style:normal;color:#222;transform:scaleX(1.0147);transform-origin:0 0;">Photo Attachments</div>
<div class="t" style="left:359.76px;top:565px;font-size:12px;font-weight:bold;font-style:normal;color:#111;transform:scaleX(0.9800);transform-origin:0 0;">Name</div>
<div class="a" style="left:401px;top:557px;width:202px;height:30px;border:1px solid #acacac;background:#fff"></div>
<div class="t" style="left:404.43px;top:561px;font-size:12px;font-weight:normal;font-style:normal;color:#222;transform:scaleX(0.9550);transform-origin:0 0;">Belly - Japan Square</div>
<div class="t" style="left:300.75px;top:605px;font-size:12px;font-weight:bold;font-style:normal;color:#111;transform:scaleX(0.9800);transform-origin:0 0;">Production Area</div>
<div class="a" style="left:401px;top:597px;width:150px;height:30px;background:#f0f0f0;border:1px solid #d9d9d9"></div>
<div class="t" style="left:406.93px;top:603px;font-size:12px;font-weight:normal;font-style:normal;color:#222;transform:scaleX(0.9550);transform-origin:0 0;">Cut</div>
<svg class="a" style="left:538px;top:610px" width="8" height="5" fill="none" stroke="#b5b5b5" stroke-width="1"><path d="M1 1 L4 4 L7 1"/></svg>
<div class="t" style="left:302.29px;top:645px;font-size:12px;font-weight:bold;font-style:normal;color:#111;transform:scaleX(0.9800);transform-origin:0 0;">Production Line</div>
<div class="a" style="left:401px;top:637px;width:150px;height:30px;background:#f0f0f0;border:1px solid #d9d9d9"></div>
<div class="t" style="left:406.93px;top:643px;font-size:12px;font-weight:normal;font-style:normal;color:#222;transform:scaleX(0.9550);transform-origin:0 0;">Belly</div>
<svg class="a" style="left:538px;top:650px" width="8" height="5" fill="none" stroke="#b5b5b5" stroke-width="1"><path d="M1 1 L4 4 L7 1"/></svg>
<div class="t" style="left:234.32px;top:685px;font-size:12px;font-weight:bold;font-style:normal;color:#111;transform:scaleX(0.9800);transform-origin:0 0;">Make Sheet Production Line</div>
<div class="a" style="left:401px;top:677px;width:150px;height:30px;background:#f0f0f0;border:1px solid #d9d9d9"></div>
<div class="t" style="left:406.93px;top:683px;font-size:12px;font-weight:normal;font-style:normal;color:#222;transform:scaleX(0.9550);transform-origin:0 0;">Belly</div>
<svg class="a" style="left:538px;top:690px" width="8" height="5" fill="none" stroke="#b5b5b5" stroke-width="1"><path d="M1 1 L4 4 L7 1"/></svg>
<div class="t" style="left:280.68px;top:725px;font-size:12px;font-weight:bold;font-style:normal;color:#111;transform:scaleX(0.9800);transform-origin:0 0;">Specific Main Break</div>
<div class="a" style="left:401px;top:717px;width:150px;height:30px;background:#f0f0f0;border:1px solid #d9d9d9"></div>
<svg class="a" style="left:538px;top:730px" width="8" height="5" fill="none" stroke="#b5b5b5" stroke-width="1"><path d="M1 1 L4 4 L7 1"/></svg>
<div class="t" style="left:312.30px;top:765px;font-size:12px;font-weight:bold;font-style:normal;color:#111;transform:scaleX(0.9800);transform-origin:0 0;">Planning Type</div>
<div class="a" style="left:401px;top:757px;width:150px;height:30px;background:#f0f0f0;border:1px solid #d9d9d9"></div>
<div class="t" style="left:406.93px;top:763px;font-size:12px;font-weight:normal;font-style:normal;color:#222;transform:scaleX(0.9550);transform-origin:0 0;">Belly</div>
<svg class="a" style="left:538px;top:770px" width="8" height="5" fill="none" stroke="#b5b5b5" stroke-width="1"><path d="M1 1 L4 4 L7 1"/></svg>
<svg class="a" style="left:577px;top:726px" width="14" height="14" fill="none" stroke="#fbc2b9" stroke-width="1.8" stroke-linecap="round"><path d="M1 1 L12.5 12.5 M12.5 1 L1 12.5"/></svg>
<svg class="a" style="left:577px;top:766px" width="14" height="14" fill="none" stroke="#fbc2b9" stroke-width="1.8" stroke-linecap="round"><path d="M1 1 L12.5 12.5 M12.5 1 L1 12.5"/></svg>
<div class="t" style="left:653.64px;top:565px;font-size:12px;font-weight:bold;font-style:normal;color:#111;transform:scaleX(0.9600);transform-origin:0 0;">Sales Category</div>
<div class="a" style="left:746px;top:557px;width:150px;height:30px;background:#f0f0f0;border:1px solid #d9d9d9"></div>
<div class="t" style="left:751.73px;top:563px;font-size:12px;font-weight:normal;font-style:normal;color:#222;transform:scaleX(0.9550);transform-origin:0 0;">#1 Belly</div>
<svg class="a" style="left:883px;top:570px" width="8" height="5" fill="none" stroke="#b5b5b5" stroke-width="1"><path d="M1 1 L4 4 L7 1"/></svg>
<div class="t" style="left:687.46px;top:605px;font-size:12px;font-weight:bold;font-style:normal;color:#111;transform:scaleX(0.9800);transform-origin:0 0;">Cut Type</div>
<div class="a" style="left:746px;top:597px;width:150px;height:30px;background:#f0f0f0;border:1px solid #d9d9d9"></div>
<div class="t" style="left:751.73px;top:603px;font-size:12px;font-weight:normal;font-style:normal;color:#222;transform:scaleX(0.9550);transform-origin:0 0;">Sub-Primal</div>
<svg class="a" style="left:883px;top:610px" width="8" height="5" fill="none" stroke="#b5b5b5" stroke-width="1"><path d="M1 1 L4 4 L7 1"/></svg>
<div class="t" style="left:700.95px;top:645px;font-size:12px;font-weight:bold;font-style:normal;color:#111;transform:scaleX(0.9800);transform-origin:0 0;">Status</div>
<div class="a" style="left:746px;top:637px;width:150px;height:30px;background:#f0f0f0;border:1px solid #d9d9d9"></div>
<div class="t" style="left:751.73px;top:643px;font-size:12px;font-weight:normal;font-style:normal;color:#222;transform:scaleX(0.9550);transform-origin:0 0;">Approved</div>
<svg class="a" style="left:883px;top:650px" width="8" height="5" fill="none" stroke="#b5b5b5" stroke-width="1"><path d="M1 1 L4 4 L7 1"/></svg>
<div class="t" style="left:669.58px;top:685px;font-size:12px;font-weight:bold;font-style:normal;color:#111;transform:scaleX(0.9800);transform-origin:0 0;">#2 Cut Spec</div>
<div class="a" style="left:742px;top:686px;width:14px;height:13px;background:#e6e6e6;border:1px solid #adadad"></div>
<div class="t" style="left:613.01px;top:725px;font-size:12px;font-weight:bold;font-style:normal;color:#111;transform:scaleX(0.9800);transform-origin:0 0;">Planning SubType</div>
<div class="a" style="left:746px;top:717px;width:150px;height:30px;background:#f0f0f0;border:1px solid #d9d9d9"></div>
<div class="t" style="left:751.73px;top:723px;font-size:12px;font-weight:normal;font-style:normal;color:#222;transform:scaleX(0.9550);transform-origin:0 0;">Japan Square</div>
<svg class="a" style="left:883px;top:730px" width="8" height="5" fill="none" stroke="#b5b5b5" stroke-width="1"><path d="M1 1 L4 4 L7 1"/></svg>
<div class="t" style="left:613.01px;top:765px;font-size:12px;font-weight:bold;font-style:normal;color:#111;transform:scaleX(0.9800);transform-origin:0 0;">Max. Conversion Rate</div>
<div class="a" style="left:746px;top:757px;width:202px;height:30px;border:1px solid #c9c9c9;background:#fff"></div>
<div class="t" style="left:750.13px;top:761px;font-size:12px;font-weight:normal;font-style:normal;color:#8a8a8a;transform:scaleX(0.9550);transform-origin:0 0;">100.00</div>
<svg class="a" style="left:922px;top:566px" width="14" height="14" fill="none" stroke="#fbc2b9" stroke-width="1.8" stroke-linecap="round"><path d="M1 1 L12.5 12.5 M12.5 1 L1 12.5"/></svg>
</body></html>
